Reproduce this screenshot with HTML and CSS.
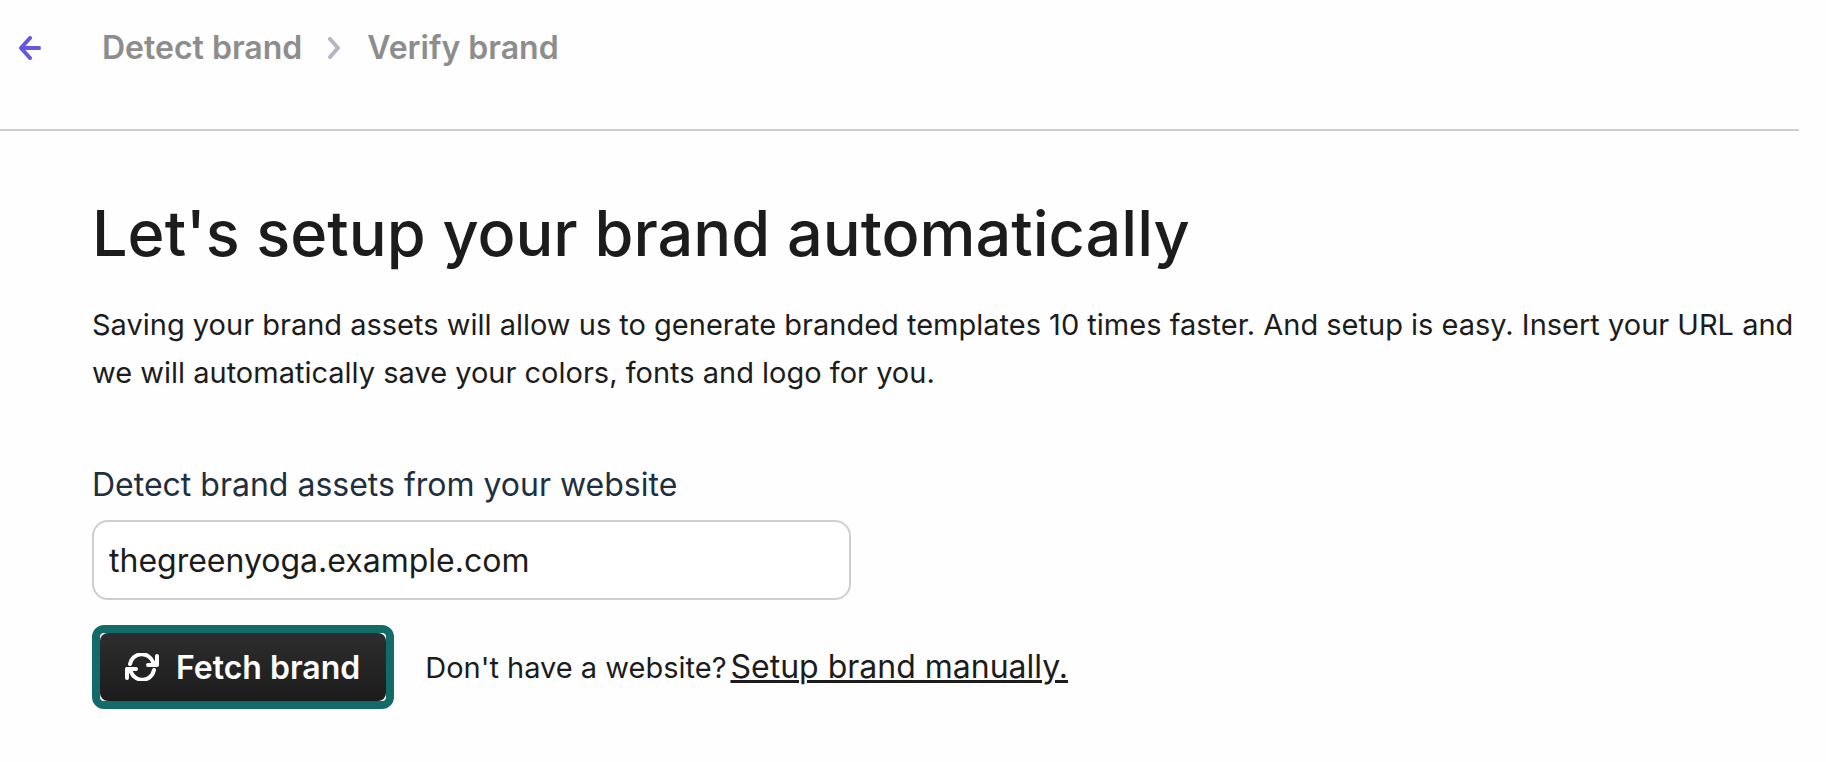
FILE: index.html
```
<!doctype html>
<html lang="en">
<head>
<meta charset="utf-8">
<title>Detect brand</title>
<link rel="stylesheet" href="styles.css">
</head>

<body>
<header class="topbar">
    <a class="back" href="#" aria-label="Back">
        <svg width="24" height="24" viewBox="0 0 24 24"><path d="M21 12H3M12 2L3 12l9 10"/></svg>
    </a>
    <nav class="steps">
        <a href="#">Detect brand</a>
        <svg width="13" height="22" viewBox="0 0 13 22"><path d="M2 2l8 9-8 9"/></svg>
        <a href="#">Verify brand</a>
    </nav>
</header>

<main class="content">
    <h1>Let's setup your brand automatically</h1>
    <p class="intro">Saving your brand assets will allow us to generate branded templates 10 times faster. And setup is easy. Insert your URL and we will automatically save your colors, fonts and logo for you.</p>

    <form class="fetch">
        <label for="site">Detect brand assets from your website</label>
        <input id="site" type="text" value="thegreenyoga.example.com">
        <div class="actions">
            <div class="ring">
                <button type="button">
                    <svg width="34" height="28" viewBox="0 0 34 28"><path d="M5 11a12 12 0 0 1 23-2l4 3M32 3v9h-9M29 17a12 12 0 0 1-23 2l-4-3M2 25v-9h9"/></svg>
                    Fetch brand
                </button>
            </div>
            <p class="hint">Don't have a website? <a href="#">Setup brand manually.</a></p>
        </div>
    </form>
</main>
</body>
</html>
```
FILE: styles.css
```
*{
    box-sizing:border-box;
    }
body{
    margin:0;
    background:#fefefe;
    color:#1c1c1c;
    font-family:Inter, "Liberation Sans", sans-serif;
    font-size:32px;
    }
svg{
    display:block;
    fill:none;
    stroke:currentColor;
    stroke-width:4;
    stroke-linecap:round;
    stroke-linejoin:round;
    }
.topbar{
    display:flex;
    align-items:center;
    gap:60px;
    margin-right:27px;
    padding:28px 18px 61px;
    border-bottom:2px solid #cecece;
    line-height:40px;
    }
.back{
    color:#6558e0;
    }
.steps{
    display:flex;
    align-items:center;
    gap:26px;
    color:#b0b8c4;
    }
.steps a{
    color:#8d8d8d;
    font-weight:600;
    text-decoration:none;
    }
.content{
    padding:62px 27px 40px 92px;
    }
h1{
    margin:0 0 28px;
    font-size:63px;
    font-weight:500;
    line-height:80px;
    }
.intro{
    margin:0;
    font-size:29px;
    line-height:48px;
    }
.fetch{
    margin-top:68px;
    }
.fetch label{
    display:block;
    margin-bottom:15px;
    color:#1e2f40;
    line-height:40px;
    }
.fetch input{
    display:block;
    width:100%;
    max-width:759px;
    height:80px;
    padding:0 15px;
    border:2px solid #cecece;
    border-radius:16px;
    background:#fff;
    color:inherit;
    font:inherit;
    }
.actions{
    display:flex;
    align-items:center;
    gap:31px;
    margin-top:25px;
    }
.ring{
    border:8px solid #126b69;
    border-radius:12px;
    background:#fff;
    }
.ring button{
    display:flex;
    align-items:center;
    gap:17px;
    height:68px;
    padding:0 26px 0 25px;
    border:0;
    border-radius:8px;
    background:linear-gradient(#2d2d2d, #1c1c1c);
    color:#fff;
    font:inherit;
    font-weight:600;
    }
.hint{
    display:flex;
    align-items:baseline;
    gap:4px;
    margin:0;
    font-size:29px;
    line-height:40px;
    }
.hint a{
    color:inherit;
    font-size:32px;
    text-decoration-thickness:3px;
    }
```
